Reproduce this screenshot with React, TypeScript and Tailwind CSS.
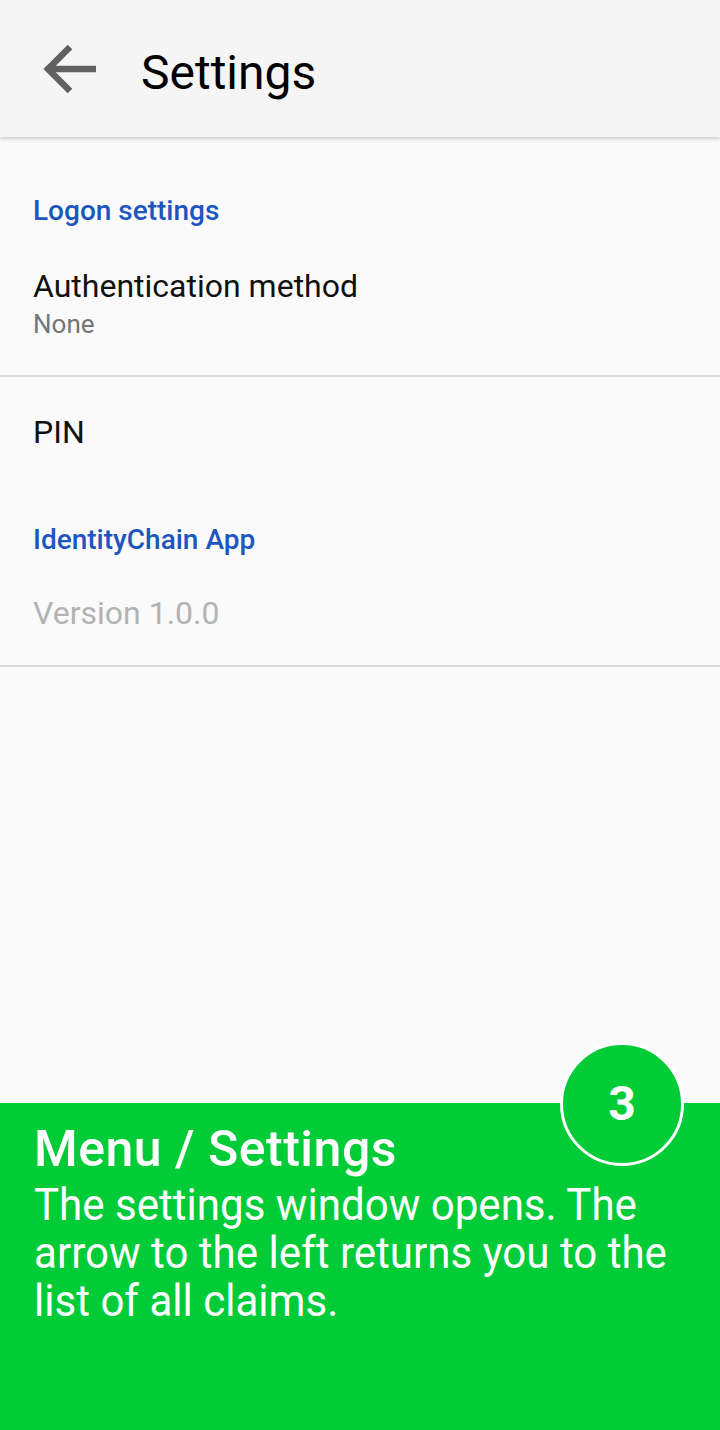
import React from "react"

const font = { fontFamily: "Roboto, 'Noto Sans', sans-serif" }

export default function App() {
	return (
		<div style={ font } className="relative flex h-[1430px] w-[720px] flex-col overflow-hidden bg-[#fafafa]">
			{/* toolbar */ }
			<header className="z-10 flex h-[137px] shrink-0 items-center bg-[#f5f5f5] shadow-[0_2px_4px_rgba(0,0,0,0.18)]">
				<svg viewBox="0 0 54 50" className="ml-[43px] h-[50px] w-[54px]" fill="none" stroke="#616161" strokeWidth="6.5" strokeLinejoin="miter">
					<path d="M4 25H53" />
					<path d="M27 3L5 25L27 47" />
				</svg>
				<h1 className="ml-[44px] pt-[8px] text-[48px] font-normal text-black">Settings</h1>
			</header>

			<main className="flex flex-col">
				<div className="px-[33px] pt-[60px] text-[28px] font-medium leading-none text-[#1f56bd]">Logon settings</div>
				<div className="flex flex-col border-b-2 border-[#dadada] px-[33px] pt-[40px] pb-[34px]">
					<span className="text-[32px] leading-[42px] text-[#111]">Authentication method</span>
					<span className="text-[26px] leading-[34px] text-[#757575]">None</span>
				</div>
				<div className="px-[33px] pt-[34px] text-[32px] leading-[42px] text-[#111]">PIN</div>
				<div className="px-[33px] pt-[70px] text-[28px] font-medium leading-[34px] text-[#1f56bd]">IdentityChain App</div>
				<div className="border-b-2 border-[#dadada] px-[33px] pt-[36px] pb-[32px] text-[32px] leading-[40px] text-[#b3b3b3]">Version 1.0.0</div>
			</main>

			{/* tutorial overlay */ }
			<section className="mt-auto flex h-[327px] flex-col bg-[#00cc38] px-[34px] pt-[17px] text-white">
				<h2 className="text-[50px] font-medium leading-[58px] tracking-[0.5px]">Menu / Settings</h2>
				<p className="mt-[3px] w-[710px] origin-left scale-x-[0.935] text-[45px] leading-[48px]">The settings window opens. The arrow to the left returns you to the list of all claims.</p>
			</section>
			<div className="absolute left-[560px] top-[1042px] flex h-[124px] w-[124px] items-center justify-center rounded-full border-[3px] border-white bg-[#00cc38]">
				<span className="text-[48px] font-bold leading-none text-white">3</span>
			</div>
		</div>
	)
}
